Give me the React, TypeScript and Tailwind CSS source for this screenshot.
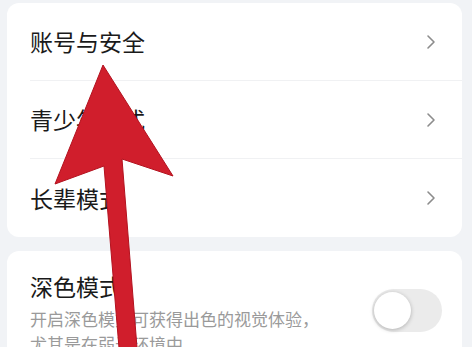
import React from "react";

const FONT = {
  fontFamily: '"Noto Sans CJK SC", "Noto Sans", sans-serif',
};

const MENU_ITEMS = ["账号与安全", "青少年模式", "长辈模式"];

const Chevron = () => (
  <svg width="10" height="16" viewBox="0 0 10 16" fill="none">
    <path
      d="M2 2l6 6-6 6"
      stroke="#8c8c8c"
      strokeWidth="1.6"
      strokeLinecap="round"
      strokeLinejoin="round"
    />
  </svg>
);

// 화살표 주석 (스크린샷 위에 그려진 빨간 화살표)
const RedArrow = () => (
  <svg
    className="absolute inset-0 pointer-events-none"
    width="472"
    height="347"
    viewBox="0 0 472 347"
  >
    <polygon
      points="103,65 173,176 122,159 138,360 120,360 104,166 55,184"
      fill="#d01e2c"
      stroke="#b3121f"
      strokeWidth="1"
      strokeLinejoin="round"
    />
  </svg>
);

const App = () => {
  return (
    <div
      className="relative w-[472px] h-[347px] overflow-hidden bg-[#f1f3f6] pl-[7px] pr-[10px] pt-[3px]"
      style={FONT}
    >
      <div className="bg-white rounded-[12px]">
        {MENU_ITEMS.map((label, i) => (
          <div key={label} className="pl-[23px]">
            <div
              className={
                i < MENU_ITEMS.length - 1
                  ? "h-[78px] flex items-center justify-between pr-[26px] border-b border-[#f0f1f3]"
                  : "h-[78px] flex items-center justify-between pr-[26px]"
              }
            >
              <span className="text-[23px] text-[#1a1a1a] leading-none">
                {label}
              </span>
              <Chevron />
            </div>
          </div>
        ))}
      </div>

      <div className="mt-[14px] bg-white rounded-[12px] pl-[23px] pr-[20px] pt-[19px] pb-4 flex items-start justify-between">
        <div>
          <div className="text-[23px] leading-[32px] text-[#1a1a1a]">深色模式</div>
          <div className="mt-[4px] text-[17px] leading-[25px] text-[#9a9a9a]">
            <div>开启深色模式可获得出色的视觉体验，</div>
            <div>尤其是在弱光环境中</div>
          </div>
        </div>
        <div className="mt-[19px] w-[70px] h-[43px] rounded-full bg-[#ebebeb] relative shrink-0">
          <div className="absolute left-[2px] top-[3px] w-[37px] h-[37px] rounded-full bg-white shadow-[0_1px_4px_rgba(0,0,0,0.25)]" />
        </div>
      </div>

      <RedArrow />
    </div>
  );
};

export default App;
